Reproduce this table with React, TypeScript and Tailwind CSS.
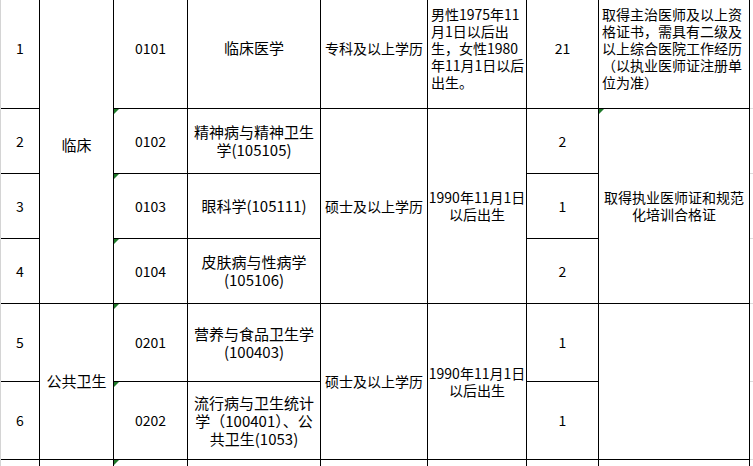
import React from "react";

const base =
  "relative flex items-center border-r border-b border-black text-black";

function Mark() {
  return (
    <span className="absolute left-0 top-0 h-[5px] w-[5px] bg-[#1f7a2a] [clip-path:polygon(0_0,100%_0,0_100%)]" />
  );
}

function Edge() {
  return <div className="border-b border-[#dcdcdc] bg-white" />;
}

const rows = [
  { no: "1", code: "0101", name: ["临床医学"], count: "21" },
  { no: "2", code: "0102", name: ["精神病与精神卫生", "学(105105)"], count: "2" },
  { no: "3", code: "0103", name: ["眼科学(105111)"], count: "1" },
  { no: "4", code: "0104", name: ["皮肤病与性病学", "(105106)"], count: "2" },
  { no: "5", code: "0201", name: ["营养与食品卫生学", "(100403)"], count: "1" },
  {
    no: "6",
    code: "0202",
    name: ["流行病与卫生统计", "学（100401）、公", "共卫生(1053)"],
    count: "1",
  },
];

function Lines({ lines }: { lines: string[] }) {
  return (
    <div>
      {lines.map((l) => (
        <div key={l}>{l}</div>
      ))}
    </div>
  );
}

export default function App() {
  const [r1, r2, r3, r4, r5, r6] = rows;

  return (
    <div className="h-[466px] w-[753px] overflow-hidden bg-white font-['Noto_Sans_CJK_SC','Noto_Sans',sans-serif] text-[14px]">
      <div className="-mt-[12px] grid grid-cols-[39px_74px_74px_133px_107px_99px_72px_151px_4px] grid-rows-[121px_65px_65px_65px_78px_78px_40px] border-l border-[#d4d4d4]">
        {/* row 1 */}
        <div className={`${base} justify-center`}>{r1.no}</div>
        <div className={`${base} row-span-4 justify-center text-[15px]`}>临床</div>
        <div className={`${base} justify-center`}>{r1.code}</div>
        <div className={`${base} justify-center text-center text-[15px] leading-[18px]`}>
          <Lines lines={r1.name} />
        </div>
        <div className={`${base} justify-center`}>专科及以上学历</div>
        <div className={`${base} pl-[3px] leading-[17px]`}>
          <Lines
            lines={[
              "男性1975年11",
              "月1日以后出",
              "生，女性1980",
              "年11月1日以后",
              "出生。",
            ]}
          />
        </div>
        <div className={`${base} justify-center`}>{r1.count}</div>
        <div className={`${base} pl-[3px] leading-[17px]`}>
          <Lines
            lines={[
              "取得主治医师及以上资",
              "格证书，需具有二级及",
              "以上综合医院工作经历",
              "（以执业医师证注册单",
              "位为准）",
            ]}
          />
        </div>
        <Edge />

        {/* row 2 */}
        <div className={`${base} justify-center`}>{r2.no}</div>
        <div className={`${base} justify-center`}>
          <Mark />
          {r2.code}
        </div>
        <div className={`${base} justify-center text-center text-[15px] leading-[18px]`}>
          <Lines lines={r2.name} />
        </div>
        <div className={`${base} row-span-3 justify-center`}>硕士及以上学历</div>
        <div className={`${base} row-span-3 justify-center text-center leading-[17px]`}>
          <Lines lines={["1990年11月1日", "以后出生"]} />
        </div>
        <div className={`${base} justify-center`}>{r2.count}</div>
        <div className={`${base} row-span-3 justify-center text-center leading-[17px]`}>
          <Mark />
          <Lines lines={["取得执业医师证和规范", "化培训合格证"]} />
        </div>
        <Edge />

        {/* row 3 */}
        <div className={`${base} justify-center`}>{r3.no}</div>
        <div className={`${base} justify-center`}>
          <Mark />
          {r3.code}
        </div>
        <div className={`${base} justify-center text-center text-[15px] leading-[18px]`}>
          <Lines lines={r3.name} />
        </div>
        <div className={`${base} justify-center`}>{r3.count}</div>
        <Edge />

        {/* row 4 */}
        <div className={`${base} justify-center`}>{r4.no}</div>
        <div className={`${base} justify-center`}>
          <Mark />
          {r4.code}
        </div>
        <div className={`${base} justify-center text-center text-[15px] leading-[18px]`}>
          <Lines lines={r4.name} />
        </div>
        <div className={`${base} justify-center`}>{r4.count}</div>
        <Edge />

        {/* row 5 */}
        <div className={`${base} justify-center`}>{r5.no}</div>
        <div className={`${base} row-span-2 justify-center text-[15px]`}>公共卫生</div>
        <div className={`${base} justify-center`}>
          <Mark />
          {r5.code}
        </div>
        <div className={`${base} justify-center text-center text-[15px] leading-[18px]`}>
          <Lines lines={r5.name} />
        </div>
        <div className={`${base} row-span-2 justify-center`}>硕士及以上学历</div>
        <div className={`${base} row-span-2 justify-center text-center leading-[17px]`}>
          <Lines lines={["1990年11月1日", "以后出生"]} />
        </div>
        <div className={`${base} justify-center`}>{r5.count}</div>
        <div className={`${base} row-span-2`} />
        <Edge />

        {/* row 6 */}
        <div className={`${base} justify-center`}>{r6.no}</div>
        <div className={`${base} justify-center`}>
          <Mark />
          {r6.code}
        </div>
        <div className={`${base} justify-center text-center text-[15px] leading-[18px]`}>
          <Lines lines={r6.name} />
        </div>
        <div className={`${base} justify-center`}>{r6.count}</div>
        <Edge />

        {/* row 7 (cut off) */}
        <div className={base} />
        <div className={base} />
        <div className={base}>
          <Mark />
        </div>
        <div className={base} />
        <div className={base} />
        <div className={base} />
        <div className={base} />
        <div className={base} />
        <Edge />
      </div>
    </div>
  );
}
